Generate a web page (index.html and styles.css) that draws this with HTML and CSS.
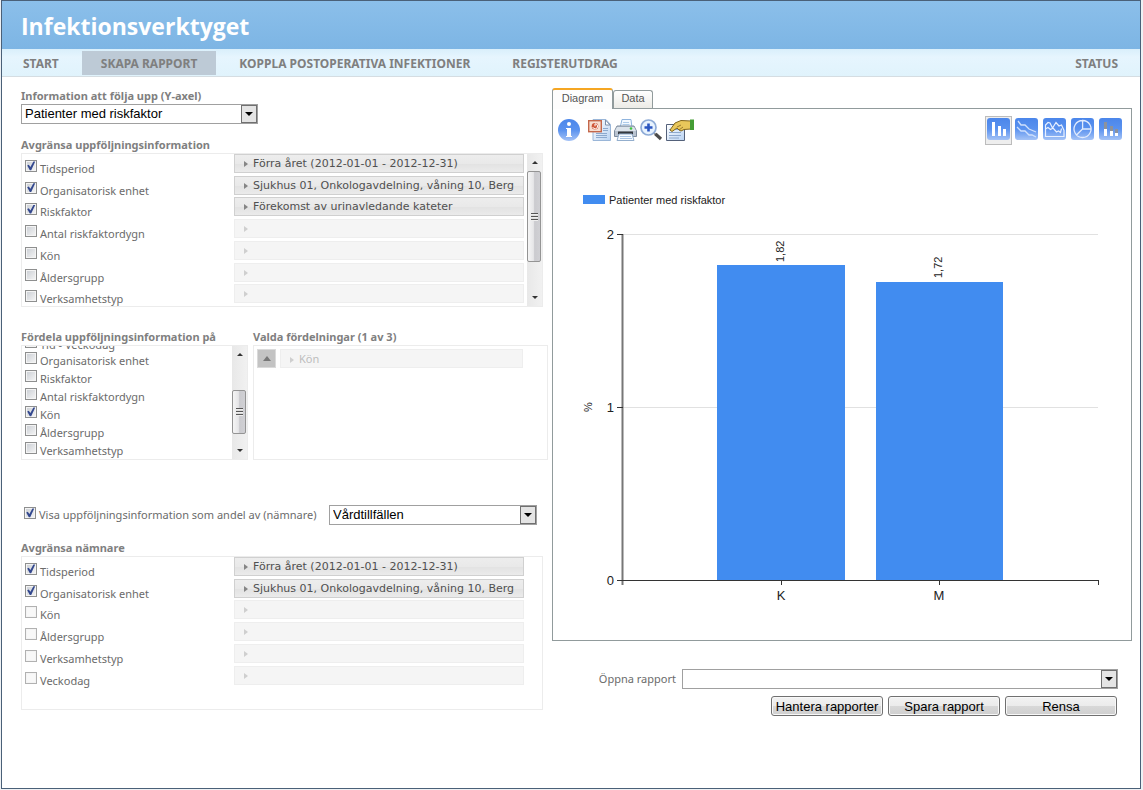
FILE: index.html
```html
<!DOCTYPE html>
<html lang="sv">
<head>
<meta charset="utf-8">
<title>Infektionsverktyget</title>
<link rel="stylesheet" href="styles.css">
</head>
<body>
<div class="frame">
  <header class="banner"><h1>Infektionsverktyget</h1></header>
  <nav class="menu">
    <a href="#">START</a>
    <a href="#" class="current">SKAPA RAPPORT</a>
    <a href="#">KOPPLA POSTOPERATIVA INFEKTIONER</a>
    <a href="#">REGISTERUTDRAG</a>
    <a href="#" class="status">STATUS</a>
  </nav>
  <main class="content">
    <section class="filters">
      <label class="heading" for="yaxis">Information att följa upp (Y-axel)</label>
      <div class="combo combo-y">
        <select id="yaxis"><option>Patienter med riskfaktor</option></select>
        <svg class="drop" viewBox="0 0 16 18"><rect x=".5" y=".5" width="15" height="17" fill="#e4e4e4" stroke="#707070"/><path d="M4 7h8l-4 4z"/></svg>
      </div>

      <h2 class="heading first">Avgränsa uppföljningsinformation</h2>
      <div class="box limit-box">
        <div class="rows seven">
          <div class="row"><label><input type="checkbox" checked>Tidsperiod</label><button class="value">Förra året (2012-01-01 - 2012-12-31)</button></div>
          <div class="row"><label><input type="checkbox" checked>Organisatorisk enhet</label><button class="value">Sjukhus 01, Onkologavdelning, våning 10, Berg</button></div>
          <div class="row"><label><input type="checkbox" checked>Riskfaktor</label><button class="value">Förekomst av urinavledande kateter</button></div>
          <div class="row"><label><input type="checkbox">Antal riskfaktordygn</label><button class="value" disabled aria-label="Antal riskfaktordygn"></button></div>
          <div class="row"><label><input type="checkbox">Kön</label><button class="value" disabled aria-label="Kön"></button></div>
          <div class="row"><label><input type="checkbox">Åldersgrupp</label><button class="value" disabled aria-label="Åldersgrupp"></button></div>
          <div class="row"><label><input type="checkbox">Verksamhetstyp</label><button class="value" disabled aria-label="Verksamhetstyp"></button></div>
        </div>
        <div class="scrollbar">
          <i class="up"></i><i class="thumb tall"></i><i class="rest"></i><i class="down"></i>
        </div>
      </div>

      <div class="split">
        <div class="split-left">
          <h2 class="heading">Fördela uppföljningsinformation på</h2>
          <div class="box split-box">
            <div class="checks">
              <label><input type="checkbox">Tid - Veckodag</label>
              <label><input type="checkbox">Organisatorisk enhet</label>
              <label><input type="checkbox">Riskfaktor</label>
              <label><input type="checkbox">Antal riskfaktordygn</label>
              <label><input type="checkbox" checked>Kön</label>
              <label><input type="checkbox">Åldersgrupp</label>
              <label><input type="checkbox">Verksamhetstyp</label>
            </div>
            <div class="scrollbar scrolled">
              <i class="up"></i><i class="rest"></i><i class="thumb"></i><i class="down"></i>
            </div>
          </div>
        </div>
        <div class="split-right">
          <h2 class="heading">Valda fördelningar (1 av 3)</h2>
          <div class="box split-box chosen">
            <button class="move" aria-label="Flytta upp"></button>
            <button class="value" disabled>Kön</button>
          </div>
        </div>
      </div>

      <div class="share">
        <label for="shareon"><input type="checkbox" id="shareon" checked>Visa uppföljningsinformation som andel av (nämnare)</label>
        <div class="combo combo-share">
          <select aria-label="Nämnare"><option>Vårdtillfällen</option></select>
          <svg class="drop" viewBox="0 0 16 18"><rect x=".5" y=".5" width="15" height="17" fill="#e4e4e4" stroke="#707070"/><path d="M4 7h8l-4 4z"/></svg>
        </div>
      </div>

      <h2 class="heading">Avgränsa nämnare</h2>
      <div class="box limit-box">
        <div class="rows seven">
          <div class="row"><label><input type="checkbox" checked>Tidsperiod</label><button class="value">Förra året (2012-01-01 - 2012-12-31)</button></div>
          <div class="row"><label><input type="checkbox" checked>Organisatorisk enhet</label><button class="value">Sjukhus 01, Onkologavdelning, våning 10, Berg</button></div>
          <div class="row"><label><input type="checkbox" disabled>Kön</label><button class="value" disabled aria-label="Kön"></button></div>
          <div class="row"><label><input type="checkbox" disabled>Åldersgrupp</label><button class="value" disabled aria-label="Åldersgrupp"></button></div>
          <div class="row"><label><input type="checkbox" disabled>Verksamhetstyp</label><button class="value" disabled aria-label="Verksamhetstyp"></button></div>
          <div class="row"><label><input type="checkbox" disabled>Veckodag</label><button class="value" disabled aria-label="Veckodag"></button></div>
        </div>
      </div>
    </section>

    <section class="report">
      <div class="tabs">
        <button class="tab active">Diagram</button>
        <button class="tab">Data</button>
      </div>
      <div class="panel">
        <svg width="0" height="0" class="defs"><defs>
          <linearGradient id="blue" x2="0" y2="1"><stop offset="0" stop-color="#4b86ea"/><stop offset=".5" stop-color="#5a92ef"/><stop offset="1" stop-color="#a5c3f6"/></linearGradient>
          <linearGradient id="sheet" x2="1" y2="1"><stop offset="0" stop-color="#fff"/><stop offset="1" stop-color="#b9d3f3"/></linearGradient>
        </defs></svg>
        <div class="toolbar">
          <button class="tool info" aria-label="Information"><svg viewBox="0 0 22 22"><circle cx="11" cy="11" r="11" fill="url(#blue)"/><circle cx="11" cy="5" r="2" fill="#fff"/><path d="M8 9h5v8h1v1H8v-1h1v-7H8z" fill="#fff"/></svg></button>
          <button class="tool" aria-label="PowerPoint"><svg viewBox="0 0 23 22"><path d="M5 .5h13l4.500 5V21.500H5z" fill="url(#sheet)" stroke="#9ab6d8"/><path d="M17.500 1v5H22z" fill="#fff" stroke="#7d90ab"/><path d="M8 14.500h11M8 16.500h11M8 18.500h11M15 9.500h5M15 11.500h5" stroke="#8ba9cf"/><rect x=".7" y="1.700" width="12.600" height="11" fill="#f7dfd2" stroke="#c4674b" stroke-width="1.400"/><circle cx="7" cy="7.300" r="3.300" fill="#cf5637"/><path d="M7 7.300V4.800A2.500 2.500 0 1 1 4.700 8" fill="none" stroke="#fff"/></svg></button>
          <button class="tool" aria-label="Skriv ut"><svg viewBox="0 0 23 22"><path d="M6 9L8 .5h9L18 9z" fill="#f4f9ff" stroke="#8fb4de"/><path d="M9 3.500h6M8.500 5.500h7" stroke="#aecbea"/><path d="M3 7h17l2.500 5v5.500H.5V12z" fill="#b9c3d0" stroke="#7d8b9d"/><path d="M3 8h17l2 4H1z" fill="#dce3eb"/><path d="M4 12.500h15v3H4z" fill="#35393f"/><path d="M5 15h13l2 6.500H3z" fill="#f8fbff" stroke="#93aecd"/><path d="M6 17.500h11M6 19.500h12" stroke="#a9c4e4"/><circle cx="17" cy="9.500" r="1.300" fill="#3ec43c"/></svg></button>
          <button class="tool" aria-label="Förstora"><svg viewBox="0 0 23 22"><path d="M13 13l3 3" stroke="#888" stroke-width="2"/><path d="M15.500 15l5.500 5" stroke="#4b4b4b" stroke-width="3.200"/><circle cx="8.500" cy="8.500" r="7.500" fill="#e8f3fe" stroke="#8eabd6" stroke-width="1.700"/><path d="M8.500 4.500v8M4.500 8.500h8" stroke="#2a55c0" stroke-width="2.600"/></svg></button>
          <button class="tool wide" aria-label="Egenskaper"><svg viewBox="0 0 28 22"><path d="M.5 5.500h18V21.500H.5z" fill="url(#sheet)" stroke="#54617a"/><path d="M3 10.500h9M3 13.500h12M3 16.500h12M3 19h10" stroke="#8ea8cc"/><path d="M4 11L9 4l6-2.500 10 .5v8l-7 .5-3 1.500-2-1-2-2-5 3.500z" fill="#e9c75b" stroke="#82661d"/><path d="M11 8l4-2m-2 5l4-3" stroke="#997a2c" fill="none"/><path d="M24 .5h4V11h-4z" fill="#459d35"/></svg></button>
          <div class="charts">
            <button class="kind picked" aria-label="Stapeldiagram"><svg viewBox="0 0 23 22"><rect width="23" height="22" rx="3" fill="url(#blue)"/><path d="M5 4h3v14H5zM11 8h3v10h-3zM16 11h3v7h-3z" fill="#fff"/></svg></button>
            <button class="kind" aria-label="Linjediagram"><svg viewBox="0 0 23 22"><rect width="23" height="22" rx="3" fill="url(#blue)"/><path d="M3 3l3 4 4 0 4 4 7 3M2 9l4 4 4 0 4 4 3 0 4 2" fill="none" stroke="#cfe0fc" stroke-width="1.300"/></svg></button>
            <button class="kind" aria-label="Ytdiagram"><svg viewBox="0 0 23 22"><rect width="23" height="22" rx="3" fill="url(#blue)"/><path d="M2.500 18.500V7L5 4.500l2 .5 2.500 5 3.500-5.500 3 3.500 2.500-1L21 12.500v6zM2.500 11L5 9.500l2.500 2L10 10l3.500 4 2-1 2 1.500 1-4" fill="none" stroke="#e8f0ff" stroke-width="1.200"/></svg></button>
            <button class="kind" aria-label="Cirkeldiagram"><svg viewBox="0 0 23 22"><rect width="23" height="22" rx="3" fill="url(#blue)"/><path d="M11.500 2.500a8.500 8.500 0 1 0 .1 0v8.500h8M11.500 11l-6 6" fill="none" stroke="#e1ebfd" stroke-width="1.300"/></svg></button>
            <button class="kind" aria-label="Staplat diagram"><svg viewBox="0 0 23 22"><rect width="23" height="22" rx="3" fill="url(#blue)"/><path d="M5 4h3v7H5zM11 8h3v5h-3zM16 11h3v4h-3z" fill="#8c929d"/><path d="M5 11h3v7H5zM11 13h3v5h-3zM16 15h3v3h-3z" fill="#fff"/></svg></button>
          </div>
        </div>
        <svg class="chart" viewBox="0 0 578 495" role="img" aria-label="Patienter med riskfaktor">
          <rect x="30" y="50" width="22" height="9" fill="#418cf0"/>
          <text x="56" y="59" class="small">Patienter med riskfaktor</text>
          <path d="M70 89.500H545M70 262.500H545" stroke="#e1e1e1"/>
          <rect x="164" y="120" width="128" height="315" fill="#418cf0"/>
          <rect x="323" y="137" width="127" height="298" fill="#418cf0"/>
          <path d="M69.500 89V440" fill="none" stroke="#777" stroke-width="2"/>
          <path d="M64 89.500h6M64 262.500h6M64 435.500h482M228.500 436v4M386.500 436v4M545.500 436v4" fill="none" stroke="#333"/>
          <text x="61" y="94" class="axis end">2</text>
          <text x="61" y="267" class="axis end">1</text>
          <text x="61" y="440" class="axis end">0</text>
          <text x="228" y="455" class="axis mid">K</text>
          <text x="386" y="455" class="axis mid">M</text>
          <text class="small" transform="translate(231 117) rotate(-90)">1,82</text>
          <text class="small" transform="translate(389 133) rotate(-90)">1,72</text>
          <text class="small mid" transform="translate(39 262) rotate(-90)">%</text>
        </svg>
      </div>

      <div class="open">
        <label for="open">Öppna rapport</label>
        <div class="combo combo-open">
          <select id="open"><option></option></select>
          <svg class="drop" viewBox="0 0 16 18"><rect x=".5" y=".5" width="15" height="17" fill="#e4e4e4" stroke="#707070"/><path d="M4 7h8l-4 4z"/></svg>
        </div>
      </div>
      <div class="actions">
        <button>Hantera rapporter</button>
        <button>Spara rapport</button>
        <button>Rensa</button>
      </div>
    </section>
  </main>
</div>
</body>
</html>
```

FILE: styles.css
```css
* { box-sizing: border-box; }
body {
  margin: 0;
  background: #eef1f4;
  color: #6b6b6b;
  font: 11px/16px "Noto Sans", "Open Sans", sans-serif;
}
button { margin: 0; padding: 0; border: 0; background: none; font: inherit; color: inherit; }
.frame {
  min-height: calc(100vh - 1px);
  margin: 0 2px 1px 1px;
  border: 1px solid #4a6078;
  background: #fff;
}
.banner {
  height: 48px;
  padding: 0 19px;
  background: linear-gradient(#8bbfea, #7db5e4);
}
.banner h1 { margin: 0; color: #fff; font-family: "Open Sans", sans-serif; font-size: 23px; font-weight: 700; line-height: 50px; }
.menu {
  display: flex;
  height: 28px;
  padding: 2px 3px 1px 2px;
  background: linear-gradient(#d9effb, #e6f5fe 30%, #e0f3fc);
  border-bottom: 1px solid #d5dde2;
}
.menu a {
  padding: 0 19px;
  margin-right: 4px;
  color: #7f7f7f;
  font-size: 12px;
  font-weight: 700;
  line-height: 25px;
  text-decoration: none;
}
.menu .current { background: #bdcad6; }
.menu .status { margin: 0 0 0 auto; }
.content { display: flex; gap: 4px; padding: 11px 8px 0 19px; }
.filters { flex: 0 0 527px; min-width: 0; }
.heading { display: block; margin: 0; height: 16px; color: #7f7f7f; font-size: 11px; font-weight: 700; line-height: 16px; white-space: nowrap; }
.first { margin-top: 13px; }

.combo { position: relative; height: 20px; }
.combo select {
  display: block;
  width: 100%;
  height: 100%;
  padding: 0 20px 1px 3px;
  border: 1px solid #a0a0a0;
  border-radius: 0;
  appearance: none;
  background: #fff;
  color: #000;
  font: 13px "Liberation Sans", Arial, sans-serif;
}
.drop { position: absolute; right: 1px; top: 1px; width: 16px; height: 18px; pointer-events: none; }
.combo-y { width: 237px; }
.combo-share { width: 208px; }
.combo-open { width: 436px; }

.box { display: flex; border: 1px solid #ececec; overflow: hidden; }
.limit-box { width: 522px; height: 154px; }
.rows { flex: 1; display: grid; height: 152px; padding-right: 3px; }
.seven { grid-template-rows: repeat(7, minmax(0, 1fr)); }
.row { display: flex; align-items: flex-start; }
.row label { flex: 0 0 212px; padding: 6px 0 0 3px; line-height: 17px; }
label input { margin: 0; }
.row label, .checks label, .share label { display: flex; gap: 3px; white-space: nowrap; }
.row input, .checks input, .share input {
  appearance: none;
  position: relative;
  flex: none;
  width: 12px;
  height: 12px;
  border: 1px solid #8e8f8f;
  outline: 1px solid #f4f4f4;
  outline-offset: -2px;
  background: linear-gradient(135deg, #c9cdd3, #f6f6f6);
}
input:checked::after {
  content: "";
  position: absolute;
  inset: 0;
  background: #33488f;
  clip-path: polygon(12% 45%, 28% 38%, 44% 60%, 74% 5%, 92% 5%, 52% 92%, 38% 92%);
}
.row input:disabled { border-color: #b1b1b1; background: #f8f8f8; }
.value {
  flex: 0 0 290px;
  height: 19px;
  padding: 0 6px 0 9px;
  border: 1px solid #d0d0d0;
  background: linear-gradient(#ededed, #e9e9e9 50%, #e2e2e2 51%, #ebebeb);
  color: #505050;
  font: 11px/17px "DejaVu Sans", Verdana, sans-serif;
  text-align: left;
  white-space: nowrap;
  overflow: hidden;
}
.value::before {
  content: "";
  display: inline-block;
  margin-right: 5px;
  border: solid transparent;
  border-width: 3px 0 3px 4px;
  border-left-color: #858585;
}
.value:disabled { border-color: #eee; background: #f5f5f5; color: #bdbdbd; }
.value:disabled::before { border-left-color: #cfcfcf; }

.scrollbar {
  flex: 0 0 15px;
  display: flex;
  flex-direction: column;
  background: linear-gradient(90deg, #e8e8e8, #f1f1f1);
}
.up, .down { flex: 0 0 17px; display: grid; place-items: center; }
.up::before, .down::before { content: ""; border: solid transparent; border-width: 0 3px 3px; border-bottom-color: #333; }
.down::before { border-width: 3px 3px 0; border-top-color: #333; }
.rest { flex: 1; }
.thumb {
  flex: 0 0 44px;
  display: grid;
  place-items: center;
  width: 14px;
  border: 1px solid #949494;
  border-radius: 2px;
  background: linear-gradient(90deg, #f5f5f5, #e6e6e8 45%, #cbcbcf 55%, #d0d0d4);
}
.tall { flex-basis: 91px; }
.scrolled .thumb { margin-bottom: 8px; }
.thumb::before { content: ""; width: 7px; height: 8px; background: repeating-linear-gradient(#555 0 1px, #eee 1px 2px, #ddd 2px 3px); }

.split { display: flex; gap: 5px; margin-top: 22px; }
.split-left { flex: 0 0 227px; }
.split-right { flex: 1; }
.split-box { height: 115px; }
.checks { flex: 1; display: flex; flex-direction: column; justify-content: flex-end; padding: 0 0 0 3px; }
.checks label { flex: none; height: 18px; line-height: 19px; }
.checks label:first-child { margin-bottom: -2px; }
.checks input { margin-top: 1px; }
.chosen { gap: 4px; align-items: flex-start; padding: 3px; }
.chosen .value { flex-basis: 243px; padding-left: 9px; font-family: "Noto Sans", sans-serif; }
.move { display: grid; place-items: center; width: 19px; height: 19px; border: 1px solid #dadada; background: #c3c3c3; }
.move::before { content: ""; border: solid transparent; border-width: 0 4px 5px; border-bottom-color: #777; }

.share { display: flex; justify-content: space-between; margin: 45px 11px 15px 3px; }
.share label { line-height: 20px; }
.share input { margin-top: 2px; }

.report { flex: 1; min-width: 0; }
.tabs { display: flex; align-items: flex-end; height: 20px; }
.tab {
  width: 40px;
  height: 18px;
  padding-bottom: 2px;
  border: 1px solid #919b9c;
  border-bottom: 0;
  border-radius: 3px 3px 0 0;
  background: linear-gradient(#fff, #ecebe6);
  color: #555;
  font: 11px/15px "Liberation Sans", Arial, sans-serif;
}
.tab.active {
  position: relative;
  width: 61px;
  height: 21px;
  margin-bottom: -1px;
  padding-bottom: 2px;
  border-top: 2px solid #f5a623;
  background: #fdfdfd;
}
.panel { border: 1px solid #919b9c; }
.defs { position: absolute; }
.toolbar { display: flex; align-items: flex-start; height: 36px; padding: 7px 7px 0 5px; }
.tool { width: 23px; height: 22px; margin: 3px 3px 0 0; }
.tool svg, .kind svg { display: block; width: 100%; height: 22px; }
.info { width: 22px; margin-right: 8px; }
.wide { width: 28px; }
.charts { display: flex; gap: 1px; margin-left: auto; }
.kind { width: 27px; height: 29px; padding: 2px 2px 5px; }
.picked { border: 1px solid #bcbcbc; background: #eee; padding: 1px 1px 4px; }
.chart { display: block; width: 100%; fill: #222; font-family: "Liberation Sans", Arial, sans-serif; }
.small { font-size: 11px; }
.axis { font-size: 13px; }
.end { text-anchor: end; }
.mid { text-anchor: middle; }

.open { display: flex; justify-content: flex-end; gap: 6px; margin: 28px 14px 0 0; line-height: 20px; }
.actions { display: flex; justify-content: flex-end; gap: 5px; margin: 7px 15px 0 0; }
.actions button {
  width: 112px;
  height: 20px;
  border: 1px solid #707070;
  border-radius: 3px;
  box-shadow: inset 0 0 0 1px #f8f8f8;
  background: linear-gradient(#f2f2f2, #ebebeb 50%, #d8d8d8 51%, #cfcfcf);
  color: #000;
  font: 13px/17px "Liberation Sans", Arial, sans-serif;
  white-space: nowrap;
}
```
